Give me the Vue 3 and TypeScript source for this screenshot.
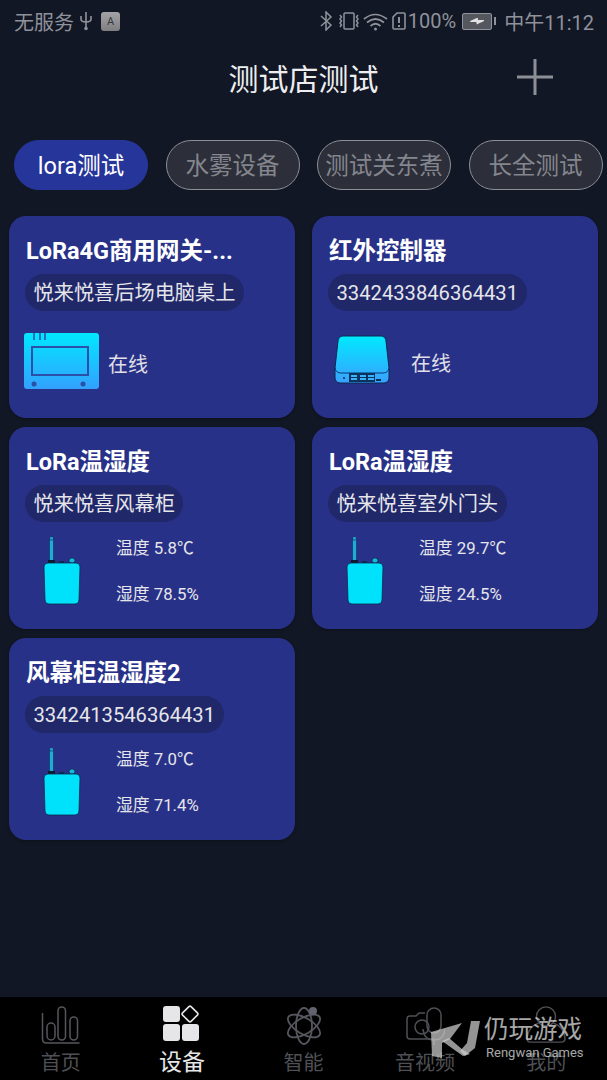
<script setup lang="ts">
interface Device {
  name: string;
  place: string;
  kind: 'gateway' | 'ir' | 'sensor';
  temp?: string;
  hum?: string;
}

const tabs = ['lora测试', '水雾设备', '测试关东煮', '长全测试'];

const devices: Device[] = [
  { name: 'LoRa4G商用网关-...', place: '悦来悦喜后场电脑桌上', kind: 'gateway' },
  { name: '红外控制器', place: '3342433846364431', kind: 'ir' },
  { name: 'LoRa温湿度', place: '悦来悦喜风幕柜', kind: 'sensor', temp: '5.8℃', hum: '78.5%' },
  { name: 'LoRa温湿度', place: '悦来悦喜室外门头', kind: 'sensor', temp: '29.7℃', hum: '24.5%' },
  { name: '风幕柜温湿度2', place: '3342413546364431', kind: 'sensor', temp: '7.0℃', hum: '71.4%' },
];
</script>

<template>
  <div class="page">
    <div class="status">
      <span class="status-text">无服务</span>
      <svg class="usb" width="14" height="20" viewBox="0 0 14 20" fill="none" stroke="#8f929a" stroke-width="1.6">
        <path d="M7 1v17M2 5v3q0 3 5 3t5-3V5" />
        <circle cx="7" cy="17.500" r="1.800" fill="#8f929a" stroke="none" />
      </svg>
      <span class="key">A</span>
      <span class="status-gap"></span>
      <svg width="14" height="20" viewBox="0 0 14 20" fill="none" stroke="#8f929a" stroke-width="1.5">
        <path d="M2 5l10 9-5 5V1l5 5-10 9" />
      </svg>
      <svg class="vib" width="24" height="20" viewBox="0 0 24 20" fill="none" stroke="#8f929a" stroke-width="1.5">
        <rect x="7" y="2" width="10" height="16" rx="1" />
        <path d="M3 4l1.500 2L3 8l1.500 2L3 12l1.500 2L3 16M21 4l-1.500 2L21 8l-1.500 2L21 12l-1.500 2L21 16" />
      </svg>
      <svg class="wifi" width="26" height="20" viewBox="0 0 26 20" fill="none" stroke="#8f929a" stroke-width="1.700">
        <path d="M1 8q11-9 23 0M4 11.500q8.500-7 17 0M7.500 15q5-4.500 10 0" />
        <circle cx="12.500" cy="18" r="1.500" fill="#8f929a" stroke="none" />
      </svg>
      <svg class="sim" width="14" height="20" viewBox="0 0 14 20" fill="none" stroke="#8f929a" stroke-width="1.6">
        <path d="M5 2h7a1 1 0 0 1 1 1v14a1 1 0 0 1-1 1H2a1 1 0 0 1-1-1V6z" />
        <path d="M7 6v6M7 14v2" stroke-width="2" />
      </svg>
      <span class="status-text pct">100%</span>
      <span class="battery"><span class="bolt"></span></span>
      <span class="status-text time">中午11:12</span>
    </div>

    <header class="header">
      <h1 class="title">测试店测试</h1>
      <svg class="plus" width="36" height="36" viewBox="0 0 36 36" stroke="#8d8f96" stroke-width="3">
        <path d="M18 0v36M0 18h36" />
      </svg>
    </header>

    <div class="tabs">
      <div v-for="(tab, i) in tabs" :key="tab" class="tab" :class="{ active: i === 0 }">{{ tab }}</div>
    </div>

    <div class="grid">
      <div v-for="d in devices" :key="d.place" class="card">
        <div class="name">{{ d.name }}</div>
        <div class="place">{{ d.place }}</div>

        <div v-if="d.kind === 'sensor'" class="sensor-row">
          <svg class="sensor-icon" width="38" height="70" viewBox="0 0 38 70">
            <rect x="7" y="1" width="3" height="4" rx="1" fill="#1aa6c8" />
            <rect x="6.500" y="4" width="4" height="21" fill="#23a8d8" stroke="#0b3a66" stroke-width="0.700" />
            <rect x="5" y="24" width="7" height="4" fill="#0a1c30" />
            <rect x="26" y="22" width="6" height="5" rx="2.500" fill="#14b8d8" stroke="#0a2a50" stroke-width="0.800" />
            <rect x="16" y="25" width="5" height="2" fill="#0a2a50" />
            <path d="M5 27h28a4 4 0 0 1 4 4l-1 33a4 4 0 0 1-4 4H6a4 4 0 0 1-4-4L1 31a4 4 0 0 1 4-4z" fill="#00e2fb" stroke="#0a2a50" stroke-width="0.800" />
          </svg>
          <div class="readings">
            <div>温度 {{ d.temp }}</div>
            <div>湿度 {{ d.hum }}</div>
          </div>
        </div>

        <div v-else class="online-row" :class="d.kind">
          <svg v-if="d.kind === 'gateway'" width="75" height="56" viewBox="0 0 75 56">
            <defs>
              <linearGradient id="gw" x1="0" y1="0" x2="0" y2="1">
                <stop offset="0" stop-color="#00e8ff" />
                <stop offset="1" stop-color="#33a0ff" />
              </linearGradient>
            </defs>
            <rect width="75" height="56" rx="3" fill="url(#gw)" />
            <path d="M10 0v7M16 0v7M21 0v7" stroke="#2c4fa8" stroke-width="1.500" />
            <rect x="8" y="14" width="56" height="28" fill="none" stroke="#2c4fa8" stroke-width="2" />
            <circle cx="10" cy="51" r="2.500" fill="#2c4fa8" />
            <circle cx="59" cy="51" r="2.500" fill="#2c4fa8" />
          </svg>
          <svg v-else width="58" height="50" viewBox="0 0 58 50">
            <defs>
              <linearGradient id="ir" x1="0" y1="0" x2="0" y2="1">
                <stop offset="0" stop-color="#00eaff" />
                <stop offset="1" stop-color="#3aa0ff" />
              </linearGradient>
            </defs>
            <path d="M10 1h38a5 5 0 0 1 5 5l3 27v10a5 5 0 0 1-5 5H7a5 5 0 0 1-5-5V33L5 6a5 5 0 0 1 5-5z" fill="url(#ir)" stroke="#0a2a50" stroke-width="1" />
            <path d="M2 33q1 5 6 5h42q5 0 6-5" fill="none" stroke="#0a3a70" stroke-width="1" />
            <rect x="16" y="38" width="26" height="9" fill="#0a3360" />
            <path d="M18 40h6v2h-6zM18 43h6v2h-6zM27 40h6v2h-6zM27 43h6v2h-6zM35 40h6v2h-6zM35 43h6v2h-6z" fill="#38b4ff" />
            <circle cx="11" cy="43" r="1" fill="#0a3360" />
            <rect x="43" y="44" width="5" height="2" fill="#0a3360" />
          </svg>
          <span class="online">在线</span>
        </div>
      </div>
    </div>

    <nav class="nav">
      <div class="nav-item">
        <svg width="40" height="40" viewBox="0 0 40 40" fill="none" stroke="#55565c" stroke-width="1.500">
          <path d="M1.500 8v26q0 4 4 4h33" />
          <rect x="6" y="18" width="8" height="17" rx="4" />
          <rect x="17" y="2" width="7.500" height="33" rx="3.750" />
          <rect x="29" y="12" width="7.500" height="23" rx="3.750" />
        </svg>
        <span>首页</span>
      </div>
      <div class="nav-item current">
        <svg width="40" height="40" viewBox="0 0 40 40">
          <rect x="1" y="1" width="17" height="16" rx="3" fill="#e6e6e8" />
          <rect x="1" y="19" width="17" height="17" rx="3" fill="#e6e6e8" />
          <rect x="20" y="19" width="17" height="17" rx="3" fill="#e6e6e8" />
          <rect x="22" y="3" width="12" height="12" rx="1.500" fill="none" stroke="#e6e6e8" stroke-width="1.600" transform="rotate(45 28 9)" />
        </svg>
        <span>设备</span>
      </div>
      <div class="nav-item">
        <svg width="40" height="40" viewBox="0 0 40 40" fill="none" stroke="#55565e" stroke-width="1.800">
          <ellipse cx="20" cy="21" rx="18" ry="8" transform="rotate(30 20 21)" />
          <ellipse cx="20" cy="21" rx="18" ry="8" transform="rotate(-30 20 21)" />
          <ellipse cx="20" cy="21" rx="18" ry="8" transform="rotate(90 20 21)" />
          <circle cx="29" cy="6" r="4" fill="#62636e" stroke="none" />
        </svg>
        <span>智能</span>
      </div>
      <div class="nav-item">
        <svg width="40" height="40" viewBox="0 0 40 40" fill="none" stroke="#4f5056" stroke-width="1.500">
          <path d="M20 8h-6l-3 3H5a3 3 0 0 0-3 3v17a3 3 0 0 0 3 3h24" />
          <circle cx="17" cy="22" r="7" />
          <rect x="22" y="3" width="14" height="25" rx="7" />
          <path d="M18 24q1 11 11 11t11-11M29 35v5" />
        </svg>
        <span>音视频</span>
      </div>
      <div class="nav-item">
        <svg width="40" height="40" viewBox="0 0 42 40" fill="none" stroke="#4f5056" stroke-width="1.500">
          <circle cx="21" cy="11" r="10" />
          <path d="M13 18Q2 22 1 34q0 4 4 4h32q4 0 4-4Q40 22 29 18" />
        </svg>
        <span>我的</span>
      </div>

      <div class="watermark">
        <svg width="59" height="56" viewBox="0 0 59 56" fill="rgba(205,205,205,0.72)">
          <path d="M6 20L37 11 25 27 17 31V46L7 44z" />
          <path d="M17 29L24 26 38 38 45 42 38 44z" />
          <path d="M46 9h9L50 36 40 44 35 39l7-8z" />
        </svg>
        <div class="wm-text">
          <div class="wm-cn">仍玩游戏</div>
          <div class="wm-en">Rengwan Games</div>
        </div>
      </div>
    </nav>
  </div>
</template>

<style scoped>
.page {
  position: relative;
  width: 607px;
  height: 1080px;
  display: flex;
  flex-direction: column;
  background: #121725;
  overflow: hidden;
  font-family: Roboto, "Noto Sans CJK SC", sans-serif;
  color: #fff;
}

.status {
  height: 42px;
  display: flex;
  align-items: center;
  padding: 0 13px 0 14px;
  gap: 5px;
  color: #8f929a;
  flex: none;
}

.status-text {
  font-size: 20px;
  white-space: nowrap;
}

.status-gap {
  flex: 1;
}

.key {
  width: 19px;
  height: 19px;
  margin-left: 3px;
  border-radius: 3px;
  background: linear-gradient(#a4a4a6, #7f7f82);
  color: #34363c;
  font-size: 11px;
  line-height: 19px;
  text-align: center;
}

.vib {
  margin-left: -1px;
}

.wifi {
  margin-left: -3px;
}

.sim {
  margin-left: -2px;
}

.pct {
  margin-left: -3px;
}

.battery {
  position: relative;
  width: 30px;
  height: 17px;
  margin-left: 1px;
  border: 1.500px solid #8f929a;
  border-radius: 2px;
  background: #55575e;
  box-sizing: border-box;
}

.battery::after {
  content: "";
  position: absolute;
  right: -5px;
  top: 3px;
  width: 2px;
  height: 8px;
  background: #8f929a;
}

.bolt {
  position: absolute;
  left: 7px;
  top: 4px;
  width: 14px;
  height: 7px;
  background: #e2e2e4;
  clip-path: polygon(0 50%, 55% 0, 55% 35%, 100% 35%, 100% 50%, 45% 100%, 45% 65%, 0 65%);
}

.time {
  margin-left: 7px;
}

.header {
  position: relative;
  height: 72px;
  padding-bottom: 3px;
  box-sizing: border-box;
  display: flex;
  align-items: center;
  justify-content: center;
  flex: none;
}

.title {
  margin: 0;
  font-size: 30px;
  font-weight: 400;
  color: #eeeef0;
}

.plus {
  position: absolute;
  right: 54px;
  top: 17px;
}

.tabs {
  display: flex;
  gap: 17.500px;
  margin-top: 26px;
  padding-left: 14px;
  flex: none;
}

.tab {
  width: 134px;
  height: 50px;
  box-sizing: border-box;
  border: 1px solid #8c8e94;
  border-radius: 25px;
  background: #2c2f3a;
  color: #84868d;
  font-size: 23.500px;
  line-height: 50px;
  text-align: center;
  white-space: nowrap;
}

.tab.active {
  border-color: #26359a;
  background: #26359a;
  color: #fff;
}

.grid {
  display: grid;
  grid-template-columns: 286px 286px;
  grid-auto-rows: 202px;
  gap: 9px 17px;
  margin-top: 26px;
  padding-left: 9px;
  flex: none;
}

.card {
  padding: 19px 0 0 17px;
  border-radius: 17px;
  background: #283188;
  box-sizing: border-box;
  box-shadow: 0 1px 3px rgba(0, 0, 0, 0.3);
}

.name {
  height: 30px;
  font-size: 23.500px;
  font-weight: 700;
  line-height: 32px;
  white-space: nowrap;
}

.place {
  display: inline-block;
  height: 37px;
  margin: 9px 0 0 -1px;
  padding: 0 8.500px;
  border-radius: 18.500px;
  background: #20286a;
  color: #e6e6ea;
  font-size: 20.200px;
  line-height: 38px;
  white-space: nowrap;
}

.online-row {
  display: flex;
  align-items: center;
  color: #e0e0e6;
}

.online-row.gateway {
  margin: 22px 0 0 -2px;
  gap: 9px;
}

.online-row.ir {
  margin: 24px 0 0 4px;
  gap: 20px;
}

.online {
  margin-top: 4px;
  font-size: 20px;
}

.sensor-row {
  display: flex;
  margin: 5px 0 0 17px;
}

.sensor-icon {
  flex: none;
  margin-top: 9px;
}

.readings {
  display: flex;
  flex-direction: column;
  gap: 22px;
  margin-left: 35px;
  padding-top: 9px;
  color: #e6e6ea;
  font-size: 16.800px;
  line-height: 24px;
  white-space: nowrap;
}

.nav {
  position: relative;
  display: flex;
  height: 83px;
  margin-top: auto;
  background: #000;
  flex: none;
}

.nav-item {
  flex: 1;
  display: flex;
  flex-direction: column;
  align-items: center;
  padding-top: 8px;
  color: #4f5055;
  font-size: 20px;
  line-height: 28px;
}

.nav-item svg {
  flex: none;
  margin-bottom: 4px;
}

.nav-item.current {
  color: #e6e6e8;
  font-size: 23px;
}

.watermark {
  position: absolute;
  left: 425px;
  top: 15px;
  display: flex;
}

.wm-text {
  margin-top: 4px;
  color: rgba(225, 225, 225, 0.75);
}

.wm-cn {
  font-size: 24.500px;
  line-height: 28px;
}

.wm-en {
  margin: 1px 0 0 2px;
  font-size: 13px;
  line-height: 15px;
  white-space: nowrap;
}
</style>
